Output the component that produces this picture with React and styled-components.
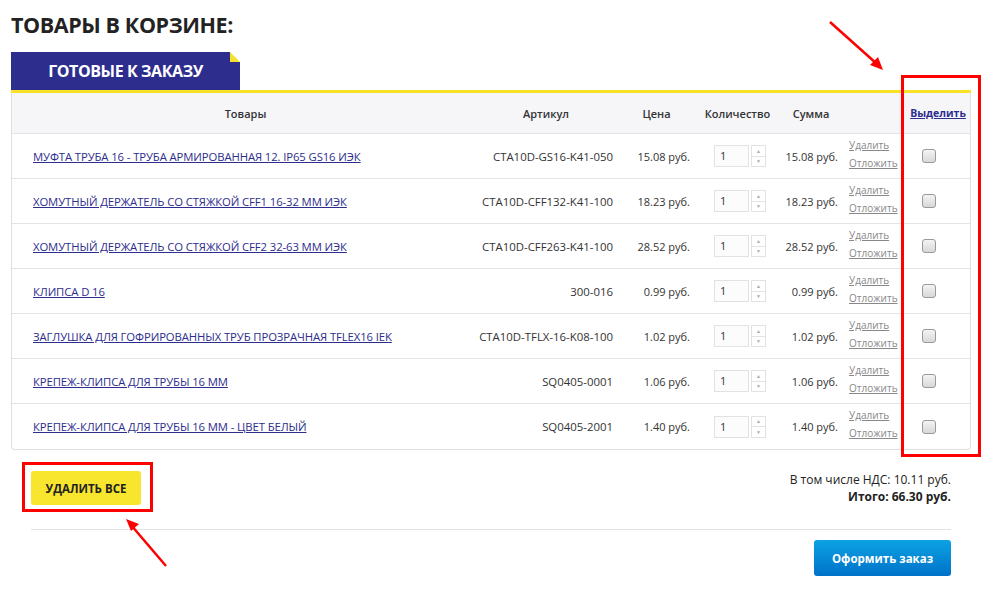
import React from 'react';
import styled, { createGlobalStyle } from 'styled-components';

const GlobalStyle = createGlobalStyle`
  body {
    margin: 0;
    background: #fff;
    font-family: 'Open Sans', 'Noto Sans', sans-serif;
    color: #222;
  }
`;

const Page = styled.div`
  position: relative;
  width: 995px;
  height: 613px;
  padding: 8px 0 0 11px;
  box-sizing: border-box;
  overflow: hidden;
`;

const Title = styled.h1`
  margin: 0;
  font-size: 21.5px;
  font-weight: 700;
  letter-spacing: -0.4px;
  color: #222;
  line-height: 33px;
`;

const Tab = styled.div`
  position: relative;
  margin-top: 11px;
  width: 229px;
  height: 38px;
  background: #2d2d8e;
  color: #fff;
  font-weight: 700;
  font-size: 16px;
  letter-spacing: -0.4px;
  display: flex;
  align-items: center;
  justify-content: center;
  padding-bottom: 1px;
  box-sizing: border-box;

  &::after {
    content: '';
    position: absolute;
    right: 0;
    top: 0;
    border-style: solid;
    border-width: 0 10px 10px 0;
    border-color: transparent #fff #f4e12c transparent;
  }
`;

const YellowLine = styled.div`
  width: 960px;
  height: 3px;
  background: #f7e227;
`;

const Table = styled.div`
  width: 960px;
  border: 1px solid #e0e0e4;
  border-top: none;
  border-radius: 0 0 4px 4px;
  box-sizing: border-box;
`;

const cols = '467px 134px 87px 75px 72px 53px 70px';

const HeadRow = styled.div`
  display: grid;
  grid-template-columns: ${cols};
  height: 40px;
  align-items: center;
  background: #f6f6f9;
  border-bottom: 1px solid #e4e4e8;
  font-size: 11px;
  font-weight: 600;
  color: #333;
  text-align: center;
`;

const SelectLink = styled.a`
  color: #2d2d8e;
  text-decoration: underline;
  font-weight: 700;
  font-size: 10.5px;
  padding-left: 6px;
`;

const Row = styled.div`
  display: grid;
  grid-template-columns: ${cols};
  height: 45px;
  align-items: center;
  border-bottom: ${p => (p.$last ? 'none' : '1px solid #e4e4e8')};
  box-sizing: border-box;
  font-size: 11px;
  color: #333;
`;

const Name = styled.a`
  padding-left: 21px;
  color: #2d2d8e;
  text-decoration: underline;
  text-transform: uppercase;
  font-size: 11.3px;
  letter-spacing: -0.1px;
`;

const Cell = styled.div`
  text-align: ${p => p.$align || 'right'};
  padding-right: ${p => p.$pr || 0}px;
  font-size: ${p => p.$size || 11}px;
  white-space: nowrap;
`;

const Qty = styled.div`
  display: flex;
  gap: 2px;
  padding-left: 14px;
`;

const QtyInput = styled.div`
  width: 35px;
  height: 22px;
  border: 1px solid #e2e2e6;
  background: #fcfcfd;
  box-sizing: border-box;
  font-size: 11px;
  line-height: 20px;
  padding-left: 5px;
`;

const Spin = styled.div`
  width: 15px;
  height: 22px;
  display: flex;
  flex-direction: column;
  border: 1px solid #e2e2e6;
  box-sizing: border-box;

  span {
    flex: 1;
    display: flex;
    align-items: center;
    justify-content: center;
    font-size: 5px;
    color: #aaa;
  }
  span + span {
    border-top: 1px solid #e2e2e6;
  }
`;

const Actions = styled.div`
  display: flex;
  flex-direction: column;
  gap: 4px;
  padding-left: 2px;
  margin-bottom: 5px;
  font-size: 10px;

  a {
    color: #888;
    text-decoration: underline;
  }
`;

const Check = styled.div`
  justify-self: center;
  margin-right: 12px;
  width: 12px;
  height: 12px;
  border: 1px solid #999;
  border-radius: 3px;
  background: linear-gradient(#f4f4f4, #d8d8d8);
`;

const Bottom = styled.div`
  display: flex;
  justify-content: space-between;
  width: 940px;
  padding: 21px 0 0 20px;
  box-sizing: border-box;
`;

const DeleteAll = styled.button`
  width: 110px;
  height: 34px;
  border: none;
  border-radius: 3px;
  background: #f8e52d;
  color: #222;
  font-family: inherit;
  font-weight: 700;
  font-size: 11.5px;
`;

const Totals = styled.div`
  text-align: right;
  font-size: 12px;
  color: #222;
  line-height: 17px;

  b {
    font-weight: 700;
  }
`;

const Divider = styled.div`
  margin: 24px 0 0 20px;
  width: 920px;
  height: 1px;
  background: #e2e2e2;
`;

const OrderRow = styled.div`
  display: flex;
  justify-content: flex-end;
  width: 940px;
  padding-top: 10px;
`;

const OrderButton = styled.button`
  width: 137px;
  height: 36px;
  border: none;
  border-radius: 3px;
  background: linear-gradient(#0ba2e2, #0072c9);
  color: #fff;
  font-family: inherit;
  font-weight: 700;
  font-size: 11.5px;
`;

const RedBox = styled.div`
  position: absolute;
  border: 3px solid #f00;
  box-sizing: border-box;
`;

const Arrows = styled.svg`
  position: absolute;
  left: 0;
  top: 0;
  pointer-events: none;
`;

const items = [
  ['Муфта труба 16 - труба армированная 12. IP65 GS16 ИЭК', 'CTA10D-GS16-K41-050', '15.08'],
  ['Хомутный держатель со стяжкой CFF1 16-32 мм ИЭК', 'CTA10D-CFF132-K41-100', '18.23'],
  ['Хомутный держатель со стяжкой CFF2 32-63 мм ИЭК', 'CTA10D-CFF263-K41-100', '28.52'],
  ['Клипса D 16', '300-016', '0.99'],
  ['Заглушка для гофрированных труб прозрачная TFLEX16 IEK', 'CTA10D-TFLX-16-K08-100', '1.02'],
  ['Крепеж-клипса для трубы 16 мм', 'SQ0405-0001', '1.06'],
  ['Крепеж-клипса для трубы 16 мм - цвет белый', 'SQ0405-2001', '1.40'],
];

export default function App() {
  return (
    <Page>
      <GlobalStyle />
      <Title>ТОВАРЫ В КОРЗИНЕ:</Title>
      <Tab>ГОТОВЫЕ К ЗАКАЗУ</Tab>
      <YellowLine />
      <Table>
        <HeadRow>
          <div>Товары</div>
          <div>Артикул</div>
          <div>Цена</div>
          <div>Количество</div>
          <div>Сумма</div>
          <div />
          <SelectLink href='#'>Выделить</SelectLink>
        </HeadRow>
        {items.map(([name, sku, price], i) => (
          <Row key={sku} $last={i === items.length - 1}>
            <div>
              <Name href='#'>{name}</Name>
            </div>
            <Cell $size={11.4}>{sku}</Cell>
            <Cell $pr={10}>{price} руб.</Cell>
            <Qty>
              <QtyInput>1</QtyInput>
              <Spin>
                <span>▲</span>
                <span>▼</span>
              </Spin>
            </Qty>
            <Cell $pr={9}>{price} руб.</Cell>
            <Actions>
              <a href='#'>Удалить</a>
              <a href='#'>Отложить</a>
            </Actions>
            <Check />
          </Row>
        ))}
      </Table>
      <Bottom>
        <DeleteAll>УДАЛИТЬ ВСЕ</DeleteAll>
        <Totals>
          <div>В том числе НДС: 10.11 руб.</div>
          <b>Итого: 66.30 руб.</b>
        </Totals>
      </Bottom>
      <Divider />
      <OrderRow>
        <OrderButton>Оформить заказ</OrderButton>
      </OrderRow>

      <RedBox style={{ left: 901, top: 75, width: 80, height: 382 }} />
      <RedBox style={{ left: 22, top: 462, width: 131, height: 50 }} />
      <Arrows width='995' height='613'>
        <g stroke='#f00' strokeWidth='2.5' fill='#f00'>
          <line x1='830' y1='22' x2='877' y2='64' />
          <polygon points='883,70 870,65 878,57' stroke='none' />
          <line x1='166' y1='566' x2='131' y2='525' />
          <polygon points='126,519 139,524 131,531' stroke='none' />
        </g>
      </Arrows>
    </Page>
  );
}
